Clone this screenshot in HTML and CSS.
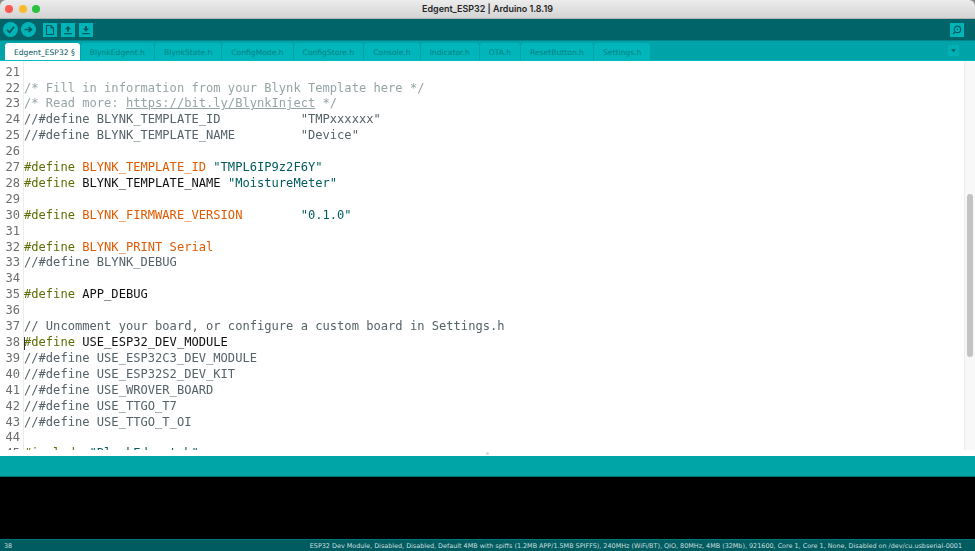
FILE: index.html
```html
<!DOCTYPE html>
<html lang="en">
<head>
<meta charset="utf-8">
<title>Edgent_ESP32 | Arduino 1.8.19</title>
<link rel="stylesheet" href="styles.css">
</head>
<body>
<div class="window">
  <header class="titlebar">
    <div class="lights"><span class="light red"></span><span class="light yellow"></span><span class="light green"></span></div>
    <div class="title">Edgent_ESP32 | Arduino 1.8.19</div>
  </header>
  <nav class="toolbar">
    <button class="round"><svg viewBox="0 0 15 15" width="15" height="15"><path d="M4 7.8 6.6 10.4 11 4.8" fill="none" stroke="#00595d" stroke-width="1.7"/></svg></button>
    <button class="round second"><svg viewBox="0 0 15 15" width="15" height="15"><path d="M3.6 7.5H10M7.6 4.8 10.4 7.5 7.6 10.2" fill="none" stroke="#00595d" stroke-width="1.6"/></svg></button>
    <button class="square first"><svg viewBox="0 0 14 14" width="14" height="14"><path d="M3.5 2.5H8L10.5 5V11.5H3.5ZM8 2.5V5H10.5" fill="none" stroke="#00595d" stroke-width="1.1"/></svg></button>
    <button class="square"><svg viewBox="0 0 14 14" width="14" height="14"><path d="M7 3 10 6.2H8V8.4H6V6.2H4Z" fill="#00595d"/><path d="M3.2 10.6H10.8" stroke="#00595d" stroke-width="1.1"/></svg></button>
    <button class="square"><svg viewBox="0 0 14 14" width="14" height="14"><path d="M7 8.8 10 5.6H8V3H6V5.6H4Z" fill="#00595d"/><path d="M3.2 10.6H10.8" stroke="#00595d" stroke-width="1.1"/></svg></button>
    <button class="square monitor"><svg viewBox="0 0 14 14" width="14" height="14"><circle cx="7.4" cy="6.4" r="3.2" fill="none" stroke="#00595d" stroke-width="1.2"/><path d="M5 9 3 11" stroke="#00595d" stroke-width="1.4"/><circle cx="7.4" cy="6.4" r=".8" fill="#00595d"/></svg></button>
  </nav>
  <div class="tabbar">
    <div class="tab active">Edgent_ESP32 §</div>
    <div class="tab">BlynkEdgent.h</div>
    <div class="tab">BlynkState.h</div>
    <div class="tab">ConfigMode.h</div>
    <div class="tab">ConfigStore.h</div>
    <div class="tab">Console.h</div>
    <div class="tab">Indicator.h</div>
    <div class="tab">OTA.h</div>
    <div class="tab">ResetButton.h</div>
    <div class="tab">Settings.h</div>
    <button class="tabmenu"><svg viewBox="0 0 11 11" width="11" height="11"><path d="M3 4.2H8L5.5 7Z" fill="#00595d"/></svg></button>
  </div>
  <main class="editor">
    <div class="gutter">21
22
23
24
25
26
27
28
29
30
31
32
33
34
35
36
37
38
39
40
41
42
43
44
45</div>
    <div class="code"><span class="caret"></span>
<span class="c">/* Fill in information from your Blynk Template here */</span>
<span class="c">/* Read more: <u>https://bit.ly/BlynkInject</u> */</span>
<span class="d">//#define BLYNK_TEMPLATE_ID           "TMPxxxxxx"</span>
<span class="d">//#define BLYNK_TEMPLATE_NAME         "Device"</span>

<span class="k">#define</span> <span class="o">BLYNK_TEMPLATE_ID</span> <span class="s">"TMPL6IP9z2F6Y"</span>
<span class="k">#define</span> BLYNK_TEMPLATE_NAME <span class="s">"MoistureMeter"</span>

<span class="k">#define</span> <span class="o">BLYNK_FIRMWARE_VERSION</span>        <span class="s">"0.1.0"</span>

<span class="k">#define</span> <span class="o">BLYNK_PRINT Serial</span>
<span class="d">//#define BLYNK_DEBUG</span>

<span class="k">#define</span> APP_DEBUG

<span class="d">// Uncomment your board, or configure a custom board in Settings.h</span>
<span class="k">#define</span> USE_ESP32_DEV_MODULE
<span class="d">//#define USE_ESP32C3_DEV_MODULE</span>
<span class="d">//#define USE_ESP32S2_DEV_KIT</span>
<span class="d">//#define USE_WROVER_BOARD</span>
<span class="d">//#define USE_TTGO_T7</span>
<span class="d">//#define USE_TTGO_T_OI</span>

<span class="k">#include</span> <span class="s">"BlynkEdgent.h"</span></div>
    <div class="track"><div class="thumb"></div></div>
    <span class="handle"></span>
  </main>
  <div class="message"></div>
  <div class="console"></div>
  <footer class="status">
    <span>38</span>
    <span>ESP32 Dev Module, Disabled, Disabled, Default 4MB with spiffs (1.2MB APP/1.5MB SPIFFS), 240MHz (WiFi/BT), QIO, 80MHz, 4MB (32Mb), 921600, Core 1, Core 1, None, Disabled on /dev/cu.usbserial-0001</span>
  </footer>
</div>
</body>
</html>
```
FILE: styles.css
```css
* { box-sizing: border-box; }
html, body { margin: 0; height: 100%; background: #8a8a8a; overflow: hidden; }
button { border: 0; padding: 0; display: flex; align-items: center; justify-content: center; }

.window { width: 975px; height: 551px; display: flex; flex-direction: column; border-radius: 6px 6px 0 0; overflow: hidden; filter: blur(.3px); }

.titlebar { height: 19px; flex: none; position: relative; display: flex; align-items: center; justify-content: center; background: linear-gradient(#ececec, #d4d4d4); border-bottom: 1px solid #b4b4b4; }
.lights { position: absolute; left: 5px; top: 5px; display: flex; gap: 5.5px; }
.light { width: 8px; height: 8px; border-radius: 50%; }
.red { background: #fb5a50; }
.yellow { background: #fbb92e; }
.green { background: #29c33f; }
.title { font: 600 8.95px "Inter", "Liberation Sans", sans-serif; color: #262626; padding-bottom: 1px; }

.toolbar { height: 21px; flex: none; display: flex; align-items: center; background: #006468; padding-left: 3px; }
.round { width: 15px; height: 15px; border-radius: 50%; background: #00b4b8; margin-right: 3px; }
.square { width: 14px; height: 14px; background: #00b4b8; margin-right: 4px; }
.square.first { margin-left: 4px; }
.square.monitor { margin-left: auto; margin-right: 11px; }

.tabbar { height: 21px; flex: none; display: flex; align-items: flex-end; gap: 1px; padding-left: 5px; background: #00a3a7; border-top: 1px solid #00868a; border-bottom: 1px solid #00bcbf; }
.tab { height: 17px; padding: 1px 9px 0; display: flex; align-items: center; font: 7.6px "DejaVu Sans", sans-serif; color: #008185; background: #00b6ba; border-radius: 3px 3px 0 0; white-space: nowrap; }
.tab.active { background: #fff; color: #00595d; padding: 1px 5px 0 9px; }
.tabmenu { margin: 0 16px 4px auto; width: 11px; height: 11px; background: #00b0b4; }

.editor { height: 395px; flex: none; background: #fff; display: flex; position: relative; padding-bottom: 6px; overflow: hidden; }
.gutter, .code { font: 12.1px/15.91px "DejaVu Sans Mono", monospace; white-space: pre; padding-top: 3.6px; overflow: hidden; }
.gutter { width: 24px; flex: none; padding-right: 3px; text-align: right; color: #6d6d6d; border-right: 1px solid #ececec; }
.code { flex: 1; color: #111; position: relative; }
.caret { position: absolute; left: 0; top: 276px; width: 1px; height: 13px; background: #333; }
.c { color: #95a5a6; }
.d { color: #566368; }
.k { color: #5e6d03; }
.o { color: #e05a00; }
.s { color: #005c5f; }
.track { width: 11px; flex: none; background: #f8f8f8; border-left: 1px solid #ececec; padding: 133px 2px 0 2px; }
.thumb { height: 163px; width: 6px; border-radius: 3px; background: #c2c2c2; }
.handle { position: absolute; left: 486px; bottom: 1px; width: 3px; height: 3px; border-radius: 50%; background: #d8d8d8; }

.message { height: 21px; flex: none; background: #00a5a8; border-top: 1px solid #00a5a8; border-bottom: 1px solid #006f73; }
.console { flex: 1; background: #000; }
.status { height: 12px; flex: none; display: flex; justify-content: space-between; align-items: center; padding: 0 13px 0 4px; background: #005c60; border-top: 1px solid #00777b; font: 6.43px "DejaVu Sans", sans-serif; color: #c9dede; white-space: nowrap; }
```
